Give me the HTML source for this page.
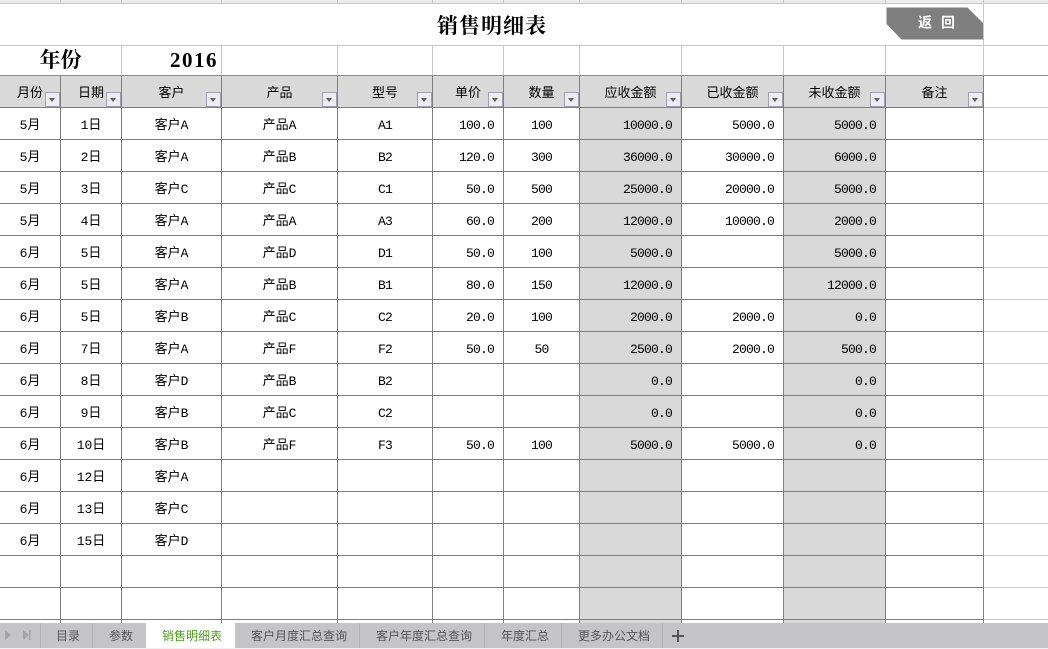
<!DOCTYPE html>
<html lang="zh"><head><meta charset="utf-8">
<style>
html,body{margin:0;padding:0;background:#fff}
#p{position:relative;width:1048px;height:649px;overflow:hidden;background:#fff;font-family:"Liberation Mono","WenQuanYi Zen Hei","Noto Sans CJK SC",monospace;font-size:13px;color:#000}
#ruler{position:absolute;left:0;top:0;width:1048px;height:3px;background:#ececec;overflow:hidden}
#ruler i{position:absolute;top:0;width:1px;height:3px;background:#c6c6c6}
#ruler b{position:absolute;top:-9px;width:40px;margin-left:-20px;text-align:center;font:bold 11px/12px "Liberation Sans",sans-serif;color:#444}
#rl{position:absolute;left:0;top:3px;width:1048px;height:1px;background:#c8c8c8}
#gl{position:absolute;left:0;top:75px;width:1048px;height:1px;background:#70a64c}
table{position:absolute;left:0;top:4px;width:1048px;table-layout:fixed;border-collapse:separate;border-spacing:0}
td{box-sizing:border-box;padding:4px 0 0;height:32px;line-height:27px;text-align:center;vertical-align:top;border-right:1px solid #7f7f7f;border-bottom:1px solid #7f7f7f;white-space:nowrap;overflow:hidden;position:relative}
.d td:nth-child(5),.d td:nth-child(6),.d td:nth-child(7),.d td:nth-child(8),.d td:nth-child(9),.d td:nth-child(10){letter-spacing:-.8px}
.d td:nth-child(6),.d td:nth-child(8),.d td:nth-child(9),.d td:nth-child(10){text-align:right;padding-right:9px}
.d td:nth-child(8),.d td:nth-child(10){background:#d9d9d9}
.t td{height:42px;padding:0;border-right:1px solid #c8c8c8;border-bottom:1px solid #c8c8c8}
.y td{height:30px;padding:0;line-height:29px;border-right:1px solid #c8c8c8;border-bottom:1px solid #70a64c}
.h td{background:#d9d9d9;padding-top:5px;line-height:26px}
tr td:last-child{border-right:0;border-bottom-color:#c8c8c8}
tr.y td:last-child{border-bottom-color:#70a64c}
tr.h td:last-child{background:#fff}
.h u{position:absolute;right:0;bottom:0;width:15px;height:15px;box-sizing:border-box;background:#eeeef2;border:1px solid #a0a0b0;text-decoration:none}
.h u:after{content:"";position:absolute;left:3px;top:5px;border-left:3.5px solid transparent;border-right:3.5px solid transparent;border-top:4px solid #606060}
.s{font-family:"Liberation Serif","Noto Serif CJK SC",serif;font-weight:bold}
#tb{position:absolute;left:0;top:623px;width:1048px;height:25px;background:#c5c5c7;overflow:hidden}
#tb span{position:absolute;top:0;font:12px/26px "Noto Sans CJK SC","WenQuanYi Zen Hei",sans-serif;color:#555;white-space:nowrap}
#tb i{position:absolute;top:0;width:1px;height:25px;background:#b5b5b7}
#act{position:absolute;left:146px;top:0;width:89px;height:25px;background:#fff}
#bb{position:absolute;left:0;top:648px;width:1048px;height:1px;background:#f0f0f0}
</style></head><body>
<div id="p">
<div id="ruler">
<i style="left:60px"></i><i style="left:121px"></i><i style="left:221px"></i><i style="left:337px"></i><i style="left:432px"></i><i style="left:503px"></i><i style="left:579px"></i><i style="left:681px"></i><i style="left:783px"></i><i style="left:885px"></i><i style="left:983px"></i>
<b style="left:30px">A</b><b style="left:90px">B</b><b style="left:171px">C</b><b style="left:279px">D</b><b style="left:385px">E</b><b style="left:468px">F</b><b style="left:541px">G</b><b style="left:630px">H</b><b style="left:732px">I</b><b style="left:834px">J</b><b style="left:934px">K</b><b style="left:1016px">L</b>
</div>
<div id="rl"></div>
<table>
<colgroup><col style="width:61px"><col style="width:61px"><col style="width:100px"><col style="width:116px"><col style="width:95px"><col style="width:71px"><col style="width:76px"><col style="width:102px"><col style="width:102px"><col style="width:102px"><col style="width:98px"><col style="width:64px"></colgroup>
<tr class="t"><td colspan="11" class="s" style="font-size:21px;padding:4px 0 0 1px;line-height:37px;letter-spacing:1px">销售明细表</td><td></td></tr>
<tr class="y"><td colspan="2" class="s" style="font-size:21px">年份</td><td class="s" style="font-size:21px;text-align:right;padding-right:3px;letter-spacing:1.5px">2016</td><td></td><td></td><td></td><td></td><td></td><td></td><td></td><td></td><td></td></tr>
<tr class="h"><td>月份<u></u></td><td>日期<u></u></td><td>客户<u></u></td><td>产品<u></u></td><td>型号<u></u></td><td>单价<u></u></td><td>数量<u></u></td><td>应收金额<u></u></td><td>已收金额<u></u></td><td>未收金额<u></u></td><td>备注<u></u></td><td></td></tr>
<tr class="d"><td>5月</td><td>1日</td><td>客户A</td><td>产品A</td><td>A1</td><td>100.0</td><td>100</td><td>10000.0</td><td>5000.0</td><td>5000.0</td><td></td><td></td></tr>
<tr class="d"><td>5月</td><td>2日</td><td>客户A</td><td>产品B</td><td>B2</td><td>120.0</td><td>300</td><td>36000.0</td><td>30000.0</td><td>6000.0</td><td></td><td></td></tr>
<tr class="d"><td>5月</td><td>3日</td><td>客户C</td><td>产品C</td><td>C1</td><td>50.0</td><td>500</td><td>25000.0</td><td>20000.0</td><td>5000.0</td><td></td><td></td></tr>
<tr class="d"><td>5月</td><td>4日</td><td>客户A</td><td>产品A</td><td>A3</td><td>60.0</td><td>200</td><td>12000.0</td><td>10000.0</td><td>2000.0</td><td></td><td></td></tr>
<tr class="d"><td>6月</td><td>5日</td><td>客户A</td><td>产品D</td><td>D1</td><td>50.0</td><td>100</td><td>5000.0</td><td></td><td>5000.0</td><td></td><td></td></tr>
<tr class="d"><td>6月</td><td>5日</td><td>客户A</td><td>产品B</td><td>B1</td><td>80.0</td><td>150</td><td>12000.0</td><td></td><td>12000.0</td><td></td><td></td></tr>
<tr class="d"><td>6月</td><td>5日</td><td>客户B</td><td>产品C</td><td>C2</td><td>20.0</td><td>100</td><td>2000.0</td><td>2000.0</td><td>0.0</td><td></td><td></td></tr>
<tr class="d"><td>6月</td><td>7日</td><td>客户A</td><td>产品F</td><td>F2</td><td>50.0</td><td>50</td><td>2500.0</td><td>2000.0</td><td>500.0</td><td></td><td></td></tr>
<tr class="d"><td>6月</td><td>8日</td><td>客户D</td><td>产品B</td><td>B2</td><td></td><td></td><td>0.0</td><td></td><td>0.0</td><td></td><td></td></tr>
<tr class="d"><td>6月</td><td>9日</td><td>客户B</td><td>产品C</td><td>C2</td><td></td><td></td><td>0.0</td><td></td><td>0.0</td><td></td><td></td></tr>
<tr class="d"><td>6月</td><td>10日</td><td>客户B</td><td>产品F</td><td>F3</td><td>50.0</td><td>100</td><td>5000.0</td><td>5000.0</td><td>0.0</td><td></td><td></td></tr>
<tr class="d"><td>6月</td><td>12日</td><td>客户A</td><td></td><td></td><td></td><td></td><td></td><td></td><td></td><td></td><td></td></tr>
<tr class="d"><td>6月</td><td>13日</td><td>客户C</td><td></td><td></td><td></td><td></td><td></td><td></td><td></td><td></td><td></td></tr>
<tr class="d"><td>6月</td><td>15日</td><td>客户D</td><td></td><td></td><td></td><td></td><td></td><td></td><td></td><td></td><td></td></tr>
<tr class="d"><td></td><td></td><td></td><td></td><td></td><td></td><td></td><td></td><td></td><td></td><td></td><td></td></tr>
<tr class="d"><td></td><td></td><td></td><td></td><td></td><td></td><td></td><td></td><td></td><td></td><td></td><td></td></tr>
<tr class="d"><td></td><td></td><td></td><td></td><td></td><td></td><td></td><td></td><td></td><td></td><td></td><td></td></tr>
</table>
<div id="gl"></div>
<svg style="position:absolute;left:886px;top:7px" width="98" height="33"><polygon points="0.5,0.5 81.5,0.5 97,16 97,32.5 15.5,32.5 0.5,17" fill="#7f7f7f"/><text x="32" y="20.5" fill="#fff" font-size="14" font-weight="bold" font-family="Noto Sans CJK SC,sans-serif">返</text><text x="55" y="20.5" fill="#fff" font-size="14" font-weight="bold" font-family="Noto Sans CJK SC,sans-serif">回</text></svg>
<div id="tb">
<svg style="position:absolute;left:0;top:0" width="40" height="25"><path d="M5 7l6 5-6 5z" fill="#a4a4a6"/><path d="M23 7l6 5-6 5z" fill="#a4a4a6"/><rect x="29" y="7" width="1.5" height="10" fill="#a4a4a6"/></svg>
<i style="left:40px"></i><i style="left:92px"></i><i style="left:359px"></i><i style="left:484px"></i><i style="left:561px"></i><i style="left:662px"></i>
<div id="act"></div>
<span style="left:56px">目录</span>
<span style="left:109px">参数</span>
<span style="left:162px;color:#4fa020">销售明细表</span>
<span style="left:251px">客户月度汇总查询</span>
<span style="left:376px">客户年度汇总查询</span>
<span style="left:501px">年度汇总</span>
<span style="left:578px">更多办公文档</span>
<svg style="position:absolute;left:671px;top:6px" width="14" height="14"><path d="M1 6h12v2H1zM6 1h2v12H6z" fill="#555"/></svg>
</div>
<div id="bb"></div>
</div>
</body></html>
